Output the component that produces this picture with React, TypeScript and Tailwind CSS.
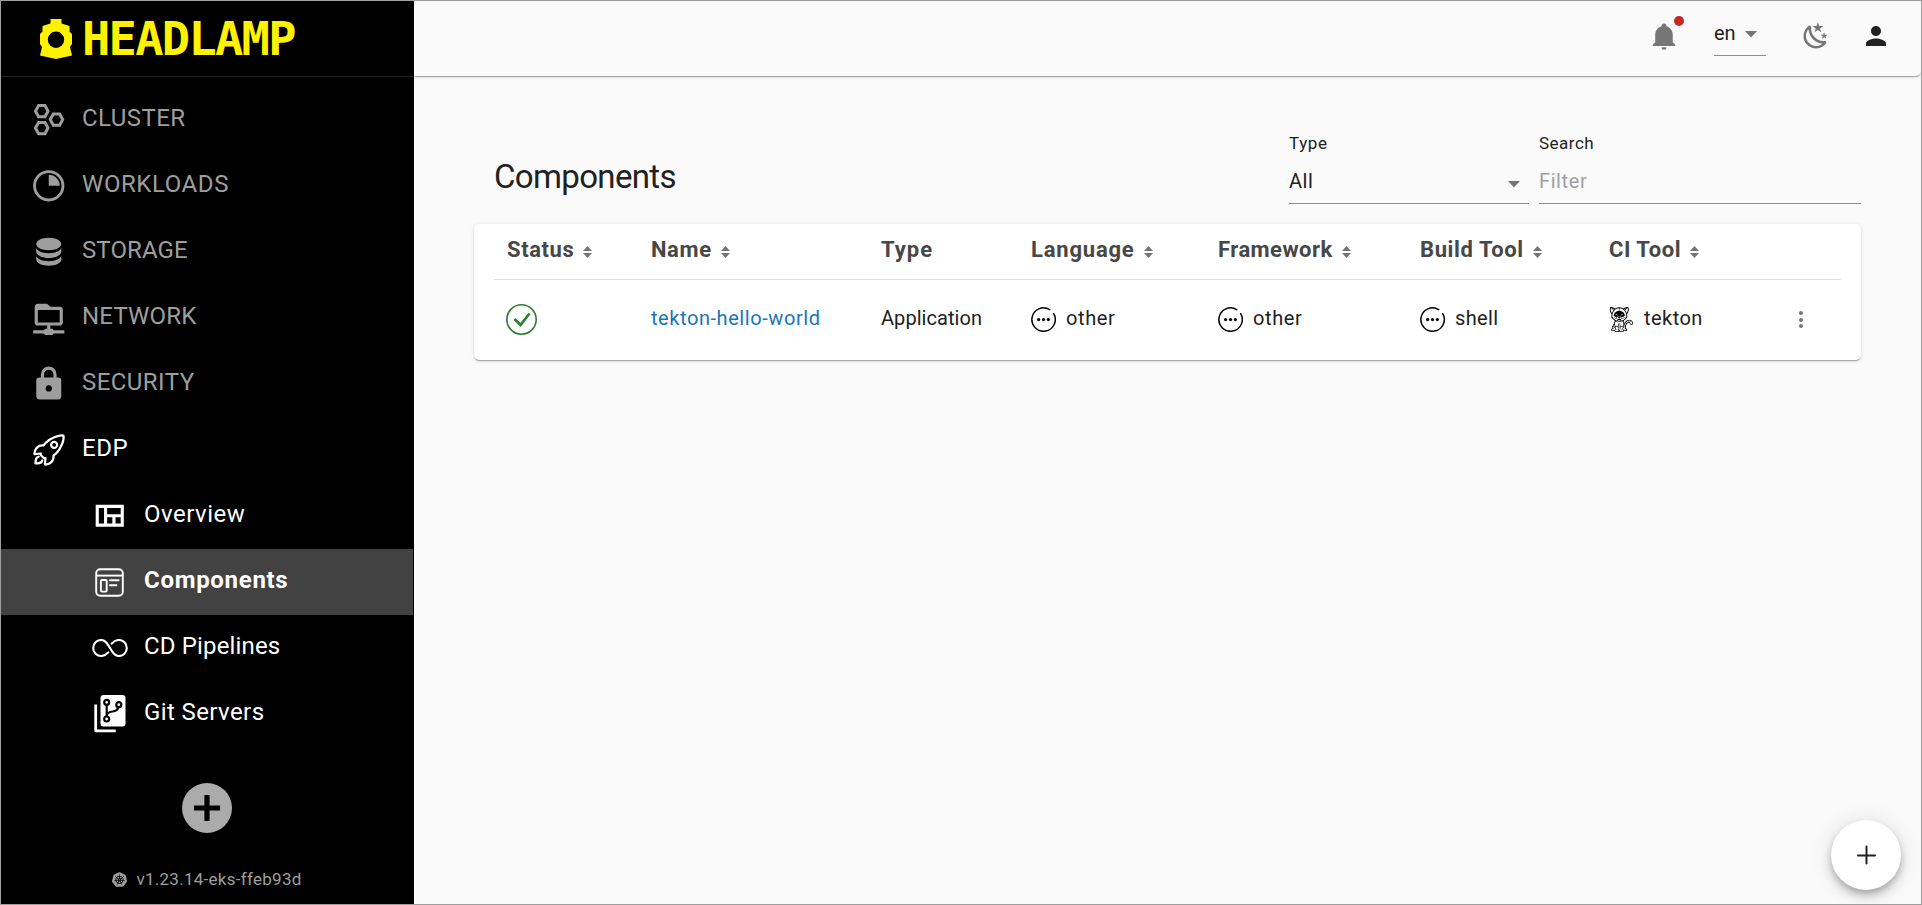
import { type ReactNode } from 'react';
import { IoRocketOutline } from 'react-icons/io5';
import { MdOutlineViewQuilt, MdPerson } from 'react-icons/md';
import { SiKubernetes, SiTekton } from 'react-icons/si';

type GlyphProps = { size?: number; className?: string; d: string };
const Glyph = ({ size = 37.5, className = '', d }: GlyphProps) => (
  <svg width={size} height={size} viewBox="0 0 24 24" fill="currentColor" className={`shrink-0 ${className}`}>
    <path d={d} />
  </svg>
);

const PIE = 'M12 2A10 10 0 1 0 22 12 10 10 0 0 0 12 2m0 18.2a8.2 8.2 0 1 1 8.2-8.2 8.2 8.2 0 0 1-8.2 8.2M12 5v7h7a7 7 0 0 0-7-7';
const DATABASE = 'M12 3C7.58 3 4 4.79 4 7s3.58 4 8 4s8-1.79 8-4s-3.58-4-8-4M4 9v3c0 2.21 3.58 4 8 4s8-1.79 8-4V9c0 2.21-3.58 4-8 4s-8-1.79-8-4m0 5v3c0 2.21 3.58 4 8 4s8-1.79 8-4v-3c0 2.21-3.58 4-8 4s-8-1.79-8-4';
const NETWORK = 'M15 20c0-.55-.45-1-1-1h-1v-2h6c1.11 0 2-.89 2-2V7a2 2 0 0 0-2-2h-6l-2-2H5c-1.1 0-2 .9-2 2v10a2 2 0 0 0 2 2h6v2h-1a1 1 0 0 0-1 1H2v2h7a1 1 0 0 0 1 1h4c.55 0 1-.45 1-1h7v-2h-7M5 15V7h14v8H5z';
const LOCK = 'M12 17a2 2 0 0 0 2-2a2 2 0 0 0-2-2a2 2 0 0 0-2 2a2 2 0 0 0 2 2m6-9a2 2 0 0 1 2 2v10a2 2 0 0 1-2 2H6a2 2 0 0 1-2-2V10a2 2 0 0 1 2-2h1V6a5 5 0 0 1 5-5a5 5 0 0 1 5 5v2h1m-6-5a3 3 0 0 0-3 3v2h6V6a3 3 0 0 0-3-3z';
const BELL = 'M21 19v1H3v-1l2-2v-6c0-3.1 2.03-5.83 5-6.71V4a2 2 0 0 1 2-2a2 2 0 0 1 2 2v.29c2.97.88 5 3.61 5 6.71v6l2 2m-7 2a2 2 0 0 1-2 2a2 2 0 0 1-2-2';
const NIGHT = 'm17.75 4.09l-2.53 1.94l.91 3.06l-2.63-1.81l-2.63 1.81l.91-3.06l-2.53-1.94L12.44 4l1.06-3l1.06 3l3.19.09m3.5 6.91l-1.64 1.25l.59 1.98l-1.7-1.17l-1.7 1.17l.59-1.98L15.75 11l2.06-.05L18.5 9l.69 1.95l2.06.05m-2.28 4.95c.83-.08 1.72 1.1 1.19 1.85c-.32.45-.66.87-1.08 1.27C15.17 23 8.84 23 4.94 19.07c-3.91-3.9-3.91-10.24 0-14.14c.4-.4.82-.76 1.27-1.08c.75-.53 1.93.36 1.85 1.19c-.27 2.86.69 5.83 2.89 8.02a9.96 9.96 0 0 0 8.02 2.89m-1.64 2.02a12.08 12.08 0 0 1-7.8-3.47c-2.17-2.19-3.33-5-3.49-7.82c-2.81 3.14-2.7 7.96.31 10.98c3.02 3.01 7.84 3.12 10.98.31z';

const ClusterIcon = () => (
  <svg width="37.5" height="37.5" viewBox="0 0 24 24" fill="none" stroke="currentColor" strokeWidth="1.9">
    <path d="M5.5 2.9h4.100l1.900 3.600-1.900 3.600H5.500L3.500 6.500z" />
    <path d="M5.500 13.700h4.100l1.900 3.600-1.900 3.600H5.500l-2-3.600z" />
    <path d="M14.900 8.300h4.100l1.900 3.600-1.900 3.600h-4.100L13 11.900z" />
  </svg>
);

const ComponentsIcon = () => (
  <svg width="29" height="29" viewBox="0 0 29 29" fill="none" stroke="currentColor" strokeWidth="1.9">
    <rect x="1.2" y="1.2" width="26.6" height="26.6" rx="4" />
    <path d="M1.2 7.6h26.6" />
    <rect x="5.9" y="12" width="5.8" height="11.6" rx="1" />
    <path d="M15 12.2h8.6M15 17.2h6.4" strokeLinecap="round" />
  </svg>
);

const PipelinesIcon = () => (
  <svg width="36" height="18" viewBox="0 0 36 18" fill="none" stroke="currentColor" strokeWidth="2.1" strokeLinecap="round">
    <path d="M16.3 13.4C14.4 15.6 12 17 9.2 17a8 8 0 0 1 0-16C17.5 1 18.5 17 26.8 17a8 8 0 0 0 0-16c-2.8 0-5.2 1.4-7.1 3.6" />
  </svg>
);

const GitIcon = () => (
  <svg width="32" height="38" viewBox="0 0 32 38" fill="none">
    <rect x="6.5" y="0" width="25" height="31.5" rx="3" fill="currentColor" />
    <path d="M1.7 9.5v26.3h20" stroke="currentColor" strokeWidth="2.8" strokeLinejoin="round" />
    <g className="stroke-black" strokeWidth="2.2">
      <circle cx="12.7" cy="7.3" r="2.5" />
      <circle cx="12.7" cy="24" r="2.5" />
      <circle cx="24.8" cy="9.7" r="2.5" />
      <path d="M12.7 9.8v11.7M24.3 12.2c-.8 3-2.8 4-5.6 4.300-3.200.3-5.400 1.500-6 4" />
    </g>
  </svg>
);

const LampLogo = () => (
  <svg width="32" height="40" viewBox="0 0 32 40" fill="currentColor" className="shrink-0">
    <path
      fillRule="evenodd"
      d="M10.500 0h11v4.500l8 2.500v5.500l2.500 2.500v10l-2 3 2 8.500L16 40 0 36.500 2 28l-2-3V15l2.500-2.500V7l8-2.500zM16 12.500a8.200 8.200 0 1 0 0 16.400 8.200 8.200 0 0 0 0-16.400z"
    />
  </svg>
);

const OtherIcon = () => (
  <svg width="25" height="25" viewBox="0 0 25 25" fill="none" stroke="black" strokeWidth="1.5" strokeLinecap="round">
    <path d="M18.7 2.6a11.7 11.7 0 1 0 4 4.100" />
    <g fill="black" stroke="none">
      <circle cx="7.600" cy="12.600" r="1.600" />
      <circle cx="12.500" cy="12.600" r="1.600" />
      <circle cx="17.400" cy="12.600" r="1.600" />
    </g>
  </svg>
);

const SortIcon = () => (
  <svg width="9" height="12" viewBox="0 0 9 12" className="mt-[4px] fill-[#757575]">
    <path d="M4.500 0 9 5H0zM0 7h9l-4.500 5z" />
  </svg>
);

const Caret = () => (
  <svg width="12" height="7" viewBox="0 0 12 7" className="fill-[#757575]">
    <path d="M0 0h12L6 6.500z" />
  </svg>
);

type ItemProps = { icon: ReactNode; sub?: boolean; active?: boolean; lit?: boolean; track: string; children: ReactNode };
const Item = ({ icon, sub, active, lit, track, children }: ItemProps) => (
  <li
    className={`flex h-[66px] items-center text-2xl ${sub ? 'pl-[88px]' : 'pl-[28px]'} ${active ? 'bg-[#424242] font-bold' : ''} ${sub || lit ? 'text-white' : 'text-[#9e9e9e]'}`}
  >
    <span className={`flex shrink-0 justify-center ${sub ? 'w-[41px]' : 'w-[39px]'}`}>{icon}</span>
    <span className={`pb-1 whitespace-nowrap ${sub ? 'pl-[14px]' : 'pl-[14px]'} ${track}`}>{children}</span>
  </li>
);

const Head = ({ sort = true, track, children }: { sort?: boolean; track: string; children: ReactNode }) => (
  <div className="flex items-center gap-[9px] pb-1 pl-[13px] text-[22px] font-bold text-[#474747]">
    <span className={`whitespace-nowrap ${track}`}>{children}</span>
    {sort && <SortIcon />}
  </div>
);

const Cell = ({ icon, track, children }: { icon?: ReactNode; track: string; children: ReactNode }) => (
  <div className="flex items-center gap-[10px] pl-[13px] text-xl text-[#212121]">
    {icon}
    <span className={`pb-[3px] whitespace-nowrap ${track}`}>{children}</span>
  </div>
);

export default function App() {
  return (
    <div className="flex h-[905px] w-[1922px] overflow-hidden border border-[#9e9e9e] bg-[#fafafa] font-[Roboto,sans-serif] text-[#212121]">
      <aside className="flex w-[413px] shrink-0 flex-col bg-black pr-px">
        <div className="flex h-[76px] items-center border-b border-[#222] pl-[39px] text-[#fff200]">
          <LampLogo />
          <span className="pl-[10px] font-['DejaVu_Sans_Mono',monospace] text-[47px] leading-none font-bold tracking-[-1.7px]">HEADLAMP</span>
        </div>
        <ul className="pt-[10px]">
          <Item icon={<ClusterIcon />} track="tracking-[0.42px]">CLUSTER</Item>
          <Item icon={<Glyph d={PIE} />} track="tracking-[0.59px]">WORKLOADS</Item>
          <Item icon={<Glyph d={DATABASE} />} track="tracking-[0.1px]">STORAGE</Item>
          <Item icon={<Glyph d={NETWORK} />} track="tracking-[0.2px]">NETWORK</Item>
          <Item icon={<Glyph d={LOCK} />} track="tracking-[0.45px]">SECURITY</Item>
          <Item lit icon={<IoRocketOutline size={36} />} track="tracking-[0.6px]">EDP</Item>
          <Item sub icon={<MdOutlineViewQuilt size={37.5} />} track="tracking-[0.5px]">Overview</Item>
          <Item sub active icon={<ComponentsIcon />} track="tracking-[0.7px]">Components</Item>
          <Item sub icon={<PipelinesIcon />} track="tracking-[0.15px]">CD Pipelines</Item>
          <Item sub icon={<GitIcon />} track="tracking-[0.4px]">Git Servers</Item>
        </ul>
        <div className="mt-[36px] flex justify-center">
          <button className="flex size-[50px] items-center justify-center rounded-full bg-[#ababab]">
            <svg width="26" height="26" viewBox="0 0 26 26" stroke="black" strokeWidth="5.2">
              <path d="M13 0v26M0 13h26" />
            </svg>
          </button>
        </div>
        <div className="mt-[34px] flex items-center justify-center gap-2 text-[17px] text-[#9e9e9e]">
          <SiKubernetes size={15} className="mr-px" />
          <span className="tracking-[0.28px]">v1.23.14-eks-ffeb93d</span>
        </div>
      </aside>
      <div className="flex min-w-0 flex-1 flex-col">
        <header className="flex h-[75px] shrink-0 items-start justify-end rounded-br-[5px] pr-[30px] shadow-[0_2px_1px_-1px_rgba(0,0,0,0.2),0_1px_1px_rgba(0,0,0,0.14),0_1px_4px_rgba(0,0,0,0.12)]">
          <span className="relative mt-5 text-[#757575]">
            <Glyph size={30} d={BELL} />
            <span className="absolute -top-[5px] left-[25px] size-[10px] rounded-full bg-[#c62828]" />
          </span>
          <span className="mt-[15px] ml-[35px] flex h-10 w-[52px] items-center gap-[9px] border-b border-[#8d8d8d] pb-1.5 text-xl">
            <span>en</span>
            <span className="pt-1"><Caret /></span>
          </span>
          <span className="mt-5 ml-[35px] text-[#757575]"><Glyph size={30} d={NIGHT} /></span>
          <MdPerson size={30} className="mt-5 ml-[30px]" />
        </header>
        <main className="relative flex-1 px-[60px] pt-[54px]">
          <div className="flex h-[74px] items-end">
            <h1 className="flex h-[54px] flex-1 items-center pl-5 text-[33px] tracking-[-0.65px]">Components</h1>
            <div className="flex w-[240px] flex-col">
              <label className="text-[17px] leading-6 tracking-[0.6px]">Type</label>
              <div className="mt-1 flex h-[45px] items-center justify-between border-b border-[#8d8d8d] pr-[9px] text-xl">
                <span className="tracking-[0.5px]">All</span>
                <span className="pt-1.5"><Caret /></span>
              </div>
            </div>
            <div className="ml-[10px] flex w-[322px] flex-col">
              <label className="text-[17px] leading-6 tracking-[0.5px]">Search</label>
              <div className="mt-1 flex h-[45px] items-center border-b border-[#8d8d8d] text-xl tracking-[0.6px] text-[#a0a0a0]">Filter</div>
            </div>
          </div>
          <section className="mt-5 h-[136px] rounded-[5px] bg-white px-5 shadow-[0_2px_1px_-1px_rgba(0,0,0,0.2),0_1px_1px_rgba(0,0,0,0.14),0_1px_4px_rgba(0,0,0,0.12)]">
            <div className="grid h-[56px] grid-cols-[144px_230px_150px_187px_202px_189px_1fr] border-b border-[#e0e0e0]">
              <Head track="tracking-[0.6px]">Status</Head>
              <Head track="tracking-[0.6px]">Name</Head>
              <Head sort={false} track="tracking-[1px]">Type</Head>
              <Head track="tracking-[0.8px]">Language</Head>
              <Head track="tracking-[0.45px]">Framework</Head>
              <Head track="tracking-[0.6px]">Build Tool</Head>
              <Head track="tracking-[0.55px]">CI Tool</Head>
            </div>
            <div className="grid h-[79px] grid-cols-[144px_230px_150px_187px_202px_189px_178px_1fr]">
              <div className="flex items-center pl-3">
                <svg width="31" height="31" viewBox="0 0 31 31" fill="none" stroke="#2e7d32">
                  <circle cx="15.5" cy="15.5" r="14.7" strokeWidth="1.6" />
                  <path d="m8.500 15 6 6 9-11.500" strokeWidth="2.600" />
                </svg>
              </div>
              <Cell track="text-[#1976b8] tracking-[0.57px]">tekton-hello-world</Cell>
              <Cell track="tracking-[0.05px]">Application</Cell>
              <Cell icon={<OtherIcon />} track="tracking-[0.6px]">other</Cell>
              <Cell icon={<OtherIcon />} track="tracking-[0.6px]">other</Cell>
              <Cell icon={<OtherIcon />} track="tracking-[0.35px]">shell</Cell>
              <Cell icon={<SiTekton size={25} color="black" />} track="tracking-[0.45px]">tekton</Cell>
              <div className="flex flex-col justify-center gap-[2.5px] pl-[25px]">
                <i className="size-1 rounded-full bg-[#757575]" />
                <i className="size-1 rounded-full bg-[#757575]" />
                <i className="size-1 rounded-full bg-[#757575]" />
              </div>
            </div>
          </section>
          <button className="absolute right-5 bottom-[14px] flex size-[70px] items-center justify-center rounded-full bg-white shadow-[0_4px_6px_-1px_rgba(0,0,0,0.2),0_7px_12px_rgba(0,0,0,0.14),0_1px_22px_rgba(0,0,0,0.12)]">
            <svg width="20" height="20" viewBox="0 0 20 20" stroke="#212121" strokeWidth="2" strokeLinecap="round">
              <path d="M10.500 1.500v17M2 10.500h17" />
            </svg>
          </button>
        </main>
      </div>
    </div>
  );
}
